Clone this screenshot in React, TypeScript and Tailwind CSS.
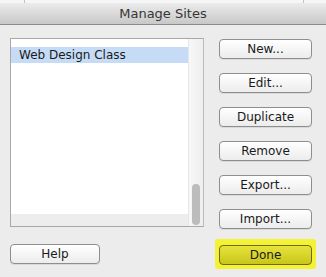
const font = { fontFamily: '"DejaVu Sans", "Liberation Sans", sans-serif' };

const MacButton = ({ label, className = "" }: { label: string; className?: string }) => (
  <button
    className={`h-[20px] w-full rounded-[4px] border border-[#8e8e8e] bg-gradient-to-b from-[#ffffff] to-[#ececec] text-[12px] leading-none text-[#1a1a1a] shadow-[0_1px_0_rgba(0,0,0,0.08)] ${className}`}
  >
    {label}
  </button>
);

export default function App() {
  const buttons = ["New...", "Edit...", "Duplicate", "Remove", "Export...", "Import..."];

  return (
    <div className="flex h-[277px] w-[326px] flex-col overflow-hidden bg-[#ececec]" style={font}>
      {/* strip of window behind */}
      <div className="flex h-[3px] bg-[#f6f6f6]">
        <div className="ml-[24px] w-px bg-[#c4c4c4]" />
        <div className="ml-[278px] w-px bg-[#c4c4c4]" />
      </div>

      {/* title bar */}
      <div className="flex h-[22px] items-center justify-center border-b border-[#8a8a8a] bg-gradient-to-b from-[#ececec] to-[#c8c8c8] text-[13px] text-[#363636]">
        Manage Sites
      </div>

      <div className="flex px-[10px] pt-[13px]">
        {/* left column */}
        <div className="flex w-[194px] flex-col">
          <div className="flex h-[189px] border border-[#a8a8a8] border-r-[#bdbdbd] bg-white">
            <div className="flex flex-1 flex-col">
              <div className="h-[8px]" />
              <div className="flex h-[16px] items-center bg-[#c6dcf6] pl-[8px] text-[12px] text-[#1a1a1a]">
                Web Design Class
              </div>
              <div className="flex-1" />
              <div className="h-[12px] bg-[#ededed]" />
            </div>
            <div className="flex w-[15px] flex-col justify-end border-l border-[#e6e6e6] bg-gradient-to-r from-[#f7f7f7] to-[#eeeeee] px-[3px] pb-[1px]">
              <div className="h-[41px] w-full rounded-full bg-[#bcbcbc]" />
            </div>
          </div>
          <div className="mt-[14px] w-[90px]">
            <MacButton label="Help" />
          </div>
        </div>

        {/* right column */}
        <div className="ml-[15px] flex w-[93px] flex-col pt-[1px]">
          <div className="flex flex-col gap-[14px]">
            {buttons.map((b) => (
              <MacButton key={b} label={b} />
            ))}
          </div>
          <div className="-mx-[4px] mt-[10px] rounded-[3px] bg-[#f4f235] px-[4px] py-[3px]">
            <button className="h-[20px] w-full rounded-[4px] border border-[#6f6a0e] bg-gradient-to-b from-[#e6e43a] to-[#c9c51a] text-[12px] leading-none text-[#1a1a1a]">
              Done
            </button>
          </div>
        </div>
      </div>
    </div>
  );
}
